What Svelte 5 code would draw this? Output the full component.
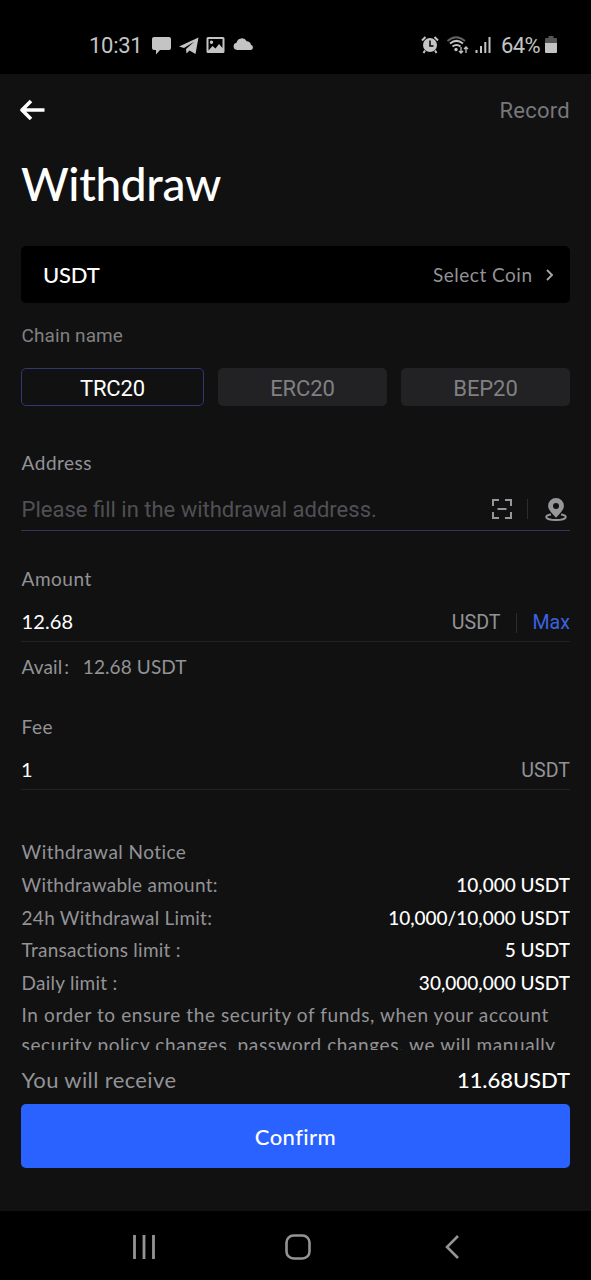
<script lang="ts">
  const chains = ['TRC20', 'ERC20', 'BEP20'];
  const limits = [
    { label: 'Withdrawable amount:', value: '10,000 USDT', key: 'amount' },
    { label: '24h Withdrawal Limit:', value: '10,000/10,000 USDT', key: 'day' },
    { label: 'Transactions limit :', value: '5 USDT', key: 'transactions' },
    { label: 'Daily limit :', value: '30,000,000 USDT', key: 'daily' }
  ];

  let selectedChain = $state('TRC20');
  let address = $state('');
  let amount = $state('12.68');
</script>

<div class="phone">
  <div class="status">
    <span class="clock">10:31</span>
    <svg class="notifications" width="104" height="24" viewBox="0 0 104 24" fill="currentColor">
      <path d="M3 4h15a2 2 0 0 1 2 2v9a2 2 0 0 1-2 2H9l-4 4.500V17H3a2 2 0 0 1-2-2V6a2 2 0 0 1 2-2z" />
      <path d="M28 13.500 47.500 4.500 44.500 21 38.500 17.500 35.500 20.500 35 16 43.500 8.500 33 15z" />
      <path fill-rule="evenodd" d="M57 4h15q1.500 0 1.500 1.500v13q0 1.500-1.500 1.500H57q-1.500 0-1.500-1.500v-13Q55.500 4 57 4zm.5 2v11.500l4-4.500 3 2.500 3.500-4.500 3.500 4V6zm3 1.500a1.700 1.700 0 1 1 0 3.400 1.700 1.700 0 0 1 0-3.400z" />
      <path d="M86 17a3.700 3.700 0 0 1-.5-7.300 5.500 5.500 0 0 1 10.200-1.500 4.500 4.500 0 0 1 4.300 3.600 2.700 2.700 0 0 1 0 5.200z" />
    </svg>
    <svg class="signals" width="72" height="24" viewBox="0 0 72 24" fill="none" stroke="currentColor">
      <circle cx="10" cy="12" r="7" fill="currentColor" stroke="none" />
      <path d="M2 7.500 5.500 4M18 7.500 14.500 4M5 17.500 3.500 20M15 17.500l1.500 2.500" stroke-width="2" />
      <path d="M10 7.500V13h3.500" stroke="#000" stroke-width="1.500" />
      <path d="M27.500 8Q36 .5 45 8" stroke-width="1.700" opacity=".5" />
      <path d="M30 10.500q6.500-5.200 13 0M32.500 13.500q4-3 8 0" stroke-width="2" />
      <circle cx="36" cy="16.500" r="1.700" fill="currentColor" stroke="none" />
      <path d="M41 14v6m-2-2 2 2 2-2M46 20v-6m-2 2 2-2 2 2" stroke-width="1.300" />
      <path d="M56.500 17v3M61 13v7M65.300 9v11M69.500 4v16" stroke-width="2" />
    </svg>
    <span class="percent">64%</span>
    <svg class="battery" width="12" height="18" viewBox="0 0 12 18">
      <path d="M3.500 0h5v2H11q1 0 1 1v5H0V3q0-1 1-1h2.500z" fill="#555" />
      <path d="M0 7h12v9q0 1-1 1H1q-1 0-1-1z" fill="currentColor" />
    </svg>
  </div>

  <main class="screen">
    <header class="topbar">
      <button class="back" type="button" aria-label="Back">
        <svg width="25" height="22" viewBox="0 0 25 22" fill="none" stroke="#fff" stroke-width="3.600">
          <path d="M11 2 2 11l9 9M2.500 11H24.500" stroke-linejoin="round" />
        </svg>
      </button>
      <span class="record">Record</span>
    </header>
    <h1>Withdraw</h1>

    <button class="coin" type="button">
      <span class="coin-name">USDT</span>
      <span class="coin-select">Select Coin</span>
      <svg width="8" height="12" viewBox="0 0 8 12" fill="none" stroke="#a5a5a9" stroke-width="1.900">
        <path d="m1 1 5 5-5 5" />
      </svg>
    </button>

    <div class="chain-label">Chain name</div>
    <div class="chains">
      {#each chains as chain (chain)}
        <button
          type="button"
          class="chain"
          class:active={selectedChain === chain}
          onclick={() => (selectedChain = chain)}
        >
          {chain}
        </button>
      {/each}
    </div>

    <div class="label address-label">Address</div>
    <div class="field address">
      <input bind:value={address} placeholder="Please fill in the withdrawal address." />
      <svg class="scan" width="20" height="20" viewBox="0 0 20 20" fill="none" stroke="#97979b" stroke-width="2">
        <path d="M1 7V1h6M13 1h6v6M19 13v6h-6M7 19H1v-6M5.500 10h9" />
      </svg>
      <span class="divider"></span>
      <svg class="pin" width="22" height="23" viewBox="0 0 22 23">
        <path
          fill="#97979b"
          fill-rule="evenodd"
          d="M11 0a7.900 7.900 0 0 1 7.900 7.900c0 4-3.700 7.200-7.900 11.900C6.800 15.100 3.100 11.900 3.100 7.900A7.900 7.900 0 0 1 11 0zm0 4.900a3 3 0 1 0 0 6 3 3 0 0 0 0-6z"
        />
        <path d="M6 16.500c-3 .5-4.800 1.200-4.800 2.400C1.200 20.600 5.500 22 11 22s9.800-1.400 9.800-3.100c0-1.200-1.800-1.900-4.800-2.400" fill="none" stroke="#97979b" stroke-width="1.900" />
      </svg>
    </div>

    <div class="label amount-label">Amount</div>
    <div class="field">
      <input class="value" bind:value={amount} />
      <span class="unit">USDT</span>
      <span class="divider"></span>
      <button class="max" type="button" onclick={() => (amount = '12.68')}>Max</button>
    </div>
    <div class="avail"><span>Avail</span><span class="colon">:</span><span>12.68 USDT</span></div>

    <div class="label fee-label">Fee</div>
    <div class="field fee">
      <span class="value fee-value">1</span>
      <span class="unit">USDT</span>
    </div>

    <section class="notice">
      <div class="row title">Withdrawal Notice</div>
      {#each limits as limit (limit.key)}
        <div class="row">
          <span class="name">{limit.label}</span>
          <span class="limit">{limit.value}</span>
        </div>
      {/each}
      <p>
        In order to ensure the security of funds, when your account<br />
        security policy changes, password changes, we will manually
      </p>
    </section>

    <div class="receive">
      <span>You will receive</span>
      <span class="total">11.68USDT</span>
    </div>
    <button class="confirm" type="button">Confirm</button>
  </main>

  <nav class="keys">
    <svg width="24" height="24" viewBox="0 0 24 24" stroke="currentColor" stroke-width="2.800">
      <path d="M2.500 0v24M12 0v24M21.500 0v24" />
    </svg>
    <svg class="home" width="26" height="26" viewBox="0 0 26 26" fill="none" stroke="currentColor" stroke-width="2.600">
      <rect x="1.500" y="1.500" width="23" height="23" rx="7" />
    </svg>
    <svg width="14" height="24" viewBox="0 0 14 24" fill="none" stroke="currentColor" stroke-width="2.600">
      <path d="M13 1 2 12l11 11" />
    </svg>
  </nav>
</div>

<style>
  :global(body) {
    background: #000;
  }

  .phone {
    display: flex;
    flex-direction: column;
    width: 591px;
    height: 1280px;
    overflow: hidden;
    background: #000;
    color: #939396;
    font-family: Lato, 'Noto Sans', sans-serif;
    font-size: 19px;
  }

  button,
  input {
    margin: 0;
    padding: 0;
    border: 0;
    outline: 0;
    background: none;
    color: inherit;
    font: inherit;
    letter-spacing: inherit;
  }

  svg {
    display: block;
    flex: none;
  }

  .status {
    display: flex;
    align-items: center;
    flex: none;
    height: 74px;
    padding: 16px 34px 0 89px;
    box-sizing: border-box;
    color: #c4c4c4;
    font-family: Roboto, sans-serif;
    font-size: 22px;
  }

  .clock {
    width: 62px;
    letter-spacing: -0.3px;
  }

  .signals {
    margin: 0 9px 0 auto;
  }

  .percent {
    width: 44px;
    white-space: nowrap;
    letter-spacing: -0.6px;
  }

  .screen {
    display: flex;
    flex-direction: column;
    flex: none;
    height: 1137px;
    padding: 0 21px;
    box-sizing: border-box;
    background: #111112;
  }

  .topbar {
    display: flex;
    align-items: center;
    justify-content: space-between;
    height: 72px;
  }

  .back {
    margin-left: -1px;
  }

  .record {
    font-family: Roboto, sans-serif;
    font-size: 22px;
    letter-spacing: 0.25px;
    color: #77777a;
  }

  h1 {
    margin: 0;
    height: 78px;
    line-height: 76px;
    color: #fff;
    font-size: 46px;
    font-weight: 500;
    letter-spacing: -0.35px;
  }

  .coin {
    display: flex;
    align-items: center;
    height: 57px;
    margin-top: 22px;
    padding: 0 16px 0 22px;
    border-radius: 5px;
    background: #000;
  }

  .coin-name {
    margin-right: auto;
    color: #fff;
    font-size: 22px;
    font-weight: 500;
    letter-spacing: -0.2px;
  }

  .coin-select {
    margin-right: 13.5px;
    letter-spacing: 0.5px;
  }

  .chain-label {
    padding-left: 0.6px;
    line-height: 65px;
    font-family: Roboto, sans-serif;
    letter-spacing: 0.08px;
    color: #808083;
  }

  .chains {
    display: grid;
    grid-template-columns: 183px 1fr 1fr;
    gap: 14px;
    height: 38px;
  }

  .chain {
    padding-top: 3px;
    border-radius: 5px;
    background: #222224;
    color: #808083;
    font-family: Roboto, sans-serif;
    font-size: 22px;
    letter-spacing: -0.1px;
  }

  .chain.active {
    border: 1px solid #303773;
    background: #111112;
    color: #fff;
  }

  .label {
    padding-left: 0.6px;
    line-height: 50px;
    letter-spacing: 0.5px;
  }

  .address-label {
    margin-top: 32px;
  }

  .amount-label {
    margin-top: 23px;
  }

  .fee-label {
    margin-top: 10px;
  }

  .field {
    display: flex;
    align-items: center;
    height: 38px;
    box-sizing: border-box;
    border-bottom: 1px solid #222224;
    font-family: Roboto, sans-serif;
    font-size: 19.6px;
  }

  .address {
    height: 43px;
    padding-right: 3px;
    border-color: #30345f;
    font-size: 22px;
  }

  .field input {
    flex: 1;
    min-width: 0;
    padding-left: 0.6px;
  }

  .field input::placeholder {
    color: #505054;
    opacity: 1;
  }

  .divider {
    width: 1px;
    height: 20px;
    margin: 0 16px 0 15px;
    background: #2d2d30;
  }

  .address .divider {
    margin-right: 17px;
  }

  .field .value {
    padding-bottom: 3px;
    color: #fff;
    font-family: Lato, sans-serif;
    font-size: 20px;
    letter-spacing: 0.1px;
  }

  .fee {
    justify-content: space-between;
  }

  .max {
    color: #3c62e0;
  }

  .avail {
    display: flex;
    padding-left: 0.6px;
    line-height: 50px;
    letter-spacing: 0.1px;
  }

  .colon {
    width: 18.5px;
    padding-left: 2px;
  }

  .notice {
    height: 214px;
    margin-top: 46px;
    padding-left: 0.6px;
    overflow: hidden;
  }

  .row {
    display: flex;
    justify-content: space-between;
    height: 32.8px;
    line-height: 32px;
  }

  .title {
    letter-spacing: 0.45px;
  }

  .name {
    letter-spacing: 0.25px;
  }

  .limit {
    color: #fff;
    font-weight: 500;
  }

  .notice p {
    margin: 0;
    line-height: 30px;
    letter-spacing: 0.6px;
    white-space: nowrap;
  }

  .receive {
    display: flex;
    justify-content: space-between;
    height: 48px;
    padding: 6px 0 0 0.6px;
    line-height: 48px;
    font-size: 22px;
    letter-spacing: 0.37px;
  }

  .total {
    color: #fff;
    font-weight: 500;
    letter-spacing: -0.05px;
  }

  .confirm {
    height: 64px;
    border-radius: 5px;
    background: #2962ff;
    color: #fff;
    font-size: 22px;
    font-weight: 500;
    letter-spacing: 0.4px;
  }

  .keys {
    display: flex;
    align-items: center;
    justify-content: space-between;
    height: 69px;
    padding: 3px 132px 0;
    color: #949494;
  }

  .home {
    margin-right: 6px;
  }
</style>
